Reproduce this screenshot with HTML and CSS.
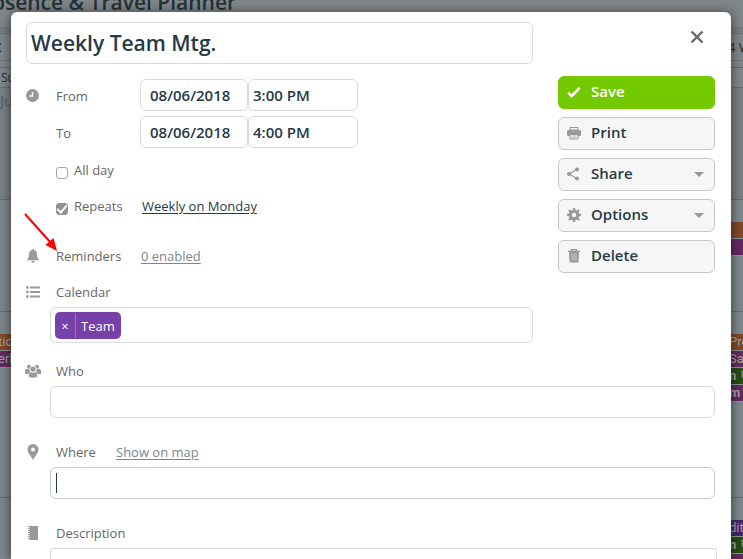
FILE: index.html
```html
<!DOCTYPE html>
<html lang="en">
<head>
<meta charset="utf-8">
<title>Absence &amp; Travel Planner</title>
<link rel="stylesheet" href="styles.css">
</head>
<body>
<div class="backdrop">
  <header class="page-title">Absence &amp; Travel Planner</header>
  <div class="toolbar"><span class="prev">‹</span><span class="weeks">4 Weeks</span></div>
  <div class="day-names"><span>Sun</span></div>
  <div class="week week-first"><div class="cell month">Jul</div></div>
  <div class="week">
    <div class="cell"></div>
    <div class="cell last"><p class="event orange"></p><p class="event magenta"></p></div>
  </div>
  <div class="week week-tall">
    <div class="cell"><p class="event orange">tion</p><p class="event magenta">erly</p></div>
    <div class="cell last"><p class="event orange">Pro</p><p class="event magenta">Sales</p><p class="event green"><b>n</b> ↻</p><p class="event magenta"><b>m</b></p></div>
  </div>
  <div class="week">
    <div class="cell"></div>
    <div class="cell last"><p class="event violet">dit</p><p class="event green"><b>n</b> ↻</p><p class="event magenta"></p></div>
  </div>
</div>

<form class="dialog" aria-label="Edit event">
  <button type="button" class="close" aria-label="Close"><svg width="14" height="14" viewBox="0 0 14 14"><path d="M1.5 1.5l11 11M12.5 1.5l-11 11" stroke="#666" stroke-width="2.4"/></svg></button>
  <div class="top">
    <div class="details">
      <input class="title" aria-label="Title" value="Weekly Team Mtg.">
      <div class="row time-row">
        <span class="icon"><svg width="14" height="14" viewBox="0 0 14 14"><circle cx="6.500" cy="7.500" r="6.500" fill="#999"/><path d="M6.500 4v4H3.500" fill="none" stroke="#fff" stroke-width="1.4"/></svg></span>
        <label class="label" for="from">From</label>
        <input class="date" id="from" value="08/06/2018"><input class="time" aria-label="From time" value="3:00 PM">
      </div>
      <div class="row time-row">
        <span class="icon"></span>
        <label class="label" for="to">To</label>
        <input class="date" id="to" value="08/06/2018"><input class="time" aria-label="To time" value="4:00 PM">
      </div>
      <div class="row check-row">
        <span class="icon"></span>
        <input type="checkbox" id="allday"><label for="allday">All day</label>
      </div>
      <div class="row check-row">
        <span class="icon"></span>
        <input type="checkbox" id="repeats" checked><label class="repeat-label" for="repeats">Repeats</label>
        <a class="dark" href="#">Weekly on Monday</a>
      </div>
      <div class="row reminder-row">
        <span class="icon"><svg width="12" height="14" viewBox="0 0 12 14"><path d="M6 0a1 1 0 0 1 1 1.1C9 1.600 10 3.200 10 5.200c0 2.800.6 4.200 1.800 5.300v.8H.2v-.8C1.400 9.400 2 8 2 5.200c0-2 1-3.600 3-4.100A1 1 0 0 1 6 0zM4.200 12h3.600a1.800 1.800 0 0 1-3.600 0z" fill="#999"/></svg></span>
        <span class="label">Reminders</span>
        <a href="#">0 enabled</a>
      </div>
      <div class="row head">
        <span class="icon"><svg width="14" height="12" viewBox="0 0 14 12"><g fill="#999"><circle cx="1.400" cy="1.500" r="1.400"/><circle cx="1.400" cy="6" r="1.400"/><circle cx="1.400" cy="10.500" r="1.400"/><path d="M4 .5h10v2H4zM4 5h10v2H4zM4 9.500h10v2H4z"/></g></svg></span>
        <span>Calendar</span>
      </div>
      <div class="field tags"><span class="tag"><button type="button" aria-label="Remove Team">×</button><span>Team</span></span></div>
    </div>
    <div class="actions">
      <button type="button" class="save"><svg width="16" height="14" viewBox="0 0 16 14"><path d="M2.200 7.600l3.500 3.600 7.800-8.400" fill="none" stroke="#fff" stroke-width="2.600"/></svg>Save</button>
      <button type="button"><svg width="16" height="14" viewBox="0 0 16 14"><g fill="#999"><path d="M4 1.500h8v2.500H4z" fill="#f6f6f6" stroke="#999"/><rect x="1" y="4" width="14" height="6" rx="1.500"/><path d="M4 8.500h8v4.500H4z" fill="#f6f6f6" stroke="#999"/><path d="M5.500 9.500h5v1h-5zM5.500 11.200h5v1h-5z" fill="#bbb"/></g></svg>Print</button>
      <button type="button"><svg width="16" height="14" viewBox="0 0 16 14"><g fill="#999"><path d="M11 2.500L3 7l8 4.500" fill="none" stroke="#999" stroke-width="1.300"/><circle cx="11" cy="2.500" r="2"/><circle cx="3" cy="7" r="2"/><circle cx="11" cy="11.500" r="2"/></g></svg>Share<i class="arrow"></i></button>
      <button type="button"><svg width="16" height="14" viewBox="0 0 16 14"><g fill="none" stroke="#999"><circle cx="8" cy="7" r="3.700" stroke-width="3"/><path d="M8 0v3M8 11v3M1 7h3M12 7h3M3 2l2 2M11 10l2 2M13 2l-2 2M5 10l-2 2" stroke-width="2.400"/></g></svg>Options<i class="arrow"></i></button>
      <button type="button"><svg width="16" height="14" viewBox="0 0 16 14"><g fill="none" stroke="#999"><path d="M5.500 2V.7h5V2M2 2.400h12" stroke-width="1.300"/><path d="M3.500 3.500h9l-.6 9.500H4.100z" fill="#999"/><path d="M6 4.500v7M8 4.500v7M10 4.500v7" stroke="#ccc"/></g></svg>Delete</button>
    </div>
  </div>
  <div class="row head">
    <span class="icon wide"><svg width="16" height="14" viewBox="0 0 16 14"><g fill="#999"><circle cx="4" cy="2.700" r="2"/><circle cx="12" cy="2.700" r="2"/><path d="M0 10V7C0 5.500 1 5 2.500 5h2L5 10zM16 10V7c0-1.500-1-2-2.500-2h-2L11 10z"/><circle cx="8" cy="5.200" r="3" stroke="#fff" stroke-width=".7"/><path d="M3.500 12.500V11c0-2 1-3 2.500-3 1.200.8 2.800.8 4 0 1.500 0 2.500 1 2.500 3v1.500c-2 2-7 2-9 0z" stroke="#fff" stroke-width=".5"/></g></svg></span>
    <label for="who">Who</label>
  </div>
  <input class="field" id="who">
  <div class="row head spaced">
    <span class="icon"><svg width="12" height="16" viewBox="0 0 12 16"><path fill-rule="evenodd" d="M6 0a5.500 5.500 0 0 1 5.500 5.500C11.500 9 8 12 6 16 4 12 .5 9 .5 5.500A5.500 5.500 0 0 1 6 0zm0 3.600a2 2 0 1 0 0 4 2 2 0 0 0 0-4z" fill="#999"/></svg></span>
    <label class="where" for="where">Where</label>
    <a href="#">Show on map</a>
  </div>
  <div class="where-box"><input class="field focus" id="where"><i class="caret"></i></div>
  <div class="row head spaced">
    <span class="icon"><svg width="10" height="14" viewBox="0 0 10 14"><path d="M1.500 0H10v14H1.500z" fill="#999"/><path d="M.7 0v14" stroke="#999" stroke-width="1.600" stroke-dasharray="1 1"/></svg></span>
    <label for="description">Description</label>
  </div>
  <textarea id="description"></textarea>
</form>

<svg class="pointer" width="36" height="40" viewBox="0 0 36 40" aria-hidden="true"><path d="M1 1l26 29" stroke="red" stroke-width="2"/><path d="M33 38l-11.500-6 8-7z" fill="red"/></svg>
</body>
</html>
```
FILE: styles.css
```css
* { box-sizing: border-box; }

html, body { height: 100%; }

body {
  margin: 0;
  overflow: hidden;
  font: 13px/20px "Open Sans", "Noto Sans", sans-serif;
  color: #666;
}

button, input, textarea { font: inherit; color: #263a47; margin: 0; }

/* Calendar behind the dialog */
.backdrop {
  height: 100%;
  overflow: hidden;
  background: #80878a;
  color: #263238;
}

.page-title {
  height: 27px;
  margin-left: -22px;
  font-size: 21px;
  line-height: 4px;
  font-weight: 600;
}

.toolbar {
  display: flex;
  justify-content: space-between;
  height: 40px;
  border-top: 6px solid #777c7e;
  line-height: 26px;
  overflow: hidden;
  white-space: nowrap;
}

.prev { width: 20px; height: 28px; margin-left: -6px; font-size: 24px; border: 1px solid #6c7274; line-height: 22px; }
.weeks { width: 15px; height: 28px; border: solid #6c7274; border-width: 1px 0; }

.day-names {
  height: 21px;
  border: solid #5d6c84;
  border-width: 1px 0;
  padding-left: 1px;
  font-size: 12px;
}

.week {
  display: flex;
  justify-content: space-between;
  height: 112px;
  padding-top: 22px;
  border-bottom: 1px solid #5f6f82;
  background: #7d878b;
}

.week-first { padding-top: 0; background: #7b8083; }
.week-tall { height: 186px; }
.cell { width: 14px; overflow: hidden; white-space: nowrap; }
.month { font-size: 15px; line-height: 24px; color: #555b5f; }
.event {
  height: 17px;
  margin: 0;
  border-bottom: 1px solid #8b9896;
  font: 13px/16px Roboto, sans-serif;
  color: #a5a5a5;
}
.cell:first-child .event { margin-left: -2px; }
.orange { background: #80492a; }
.magenta { background: #632a61; }
.green { background: #284d14; }
.violet { background: #44286b; }

/* Dialog */
.dialog {
  position: absolute;
  inset: 12px 12px 0 11px;
  padding: 10px 16px 0 15px;
  overflow: hidden;
  border-radius: 6px 6px 0 0;
  background: #fff;
  box-shadow: 0 1px 12px rgba(0, 0, 0, .6);
}

.close {
  position: absolute;
  top: 18px;
  right: 27px;
  display: flex;
  padding: 0;
  border: 0;
  background: none;
}

.top { display: grid; grid-template-columns: 1fr 157px; gap: 25px; margin-bottom: 18px; }

.row { display: flex; align-items: center; }
.icon { display: flex; justify-content: center; width: 14px; margin-right: 16px; flex: none; }
.icon svg { flex: none; }
.label { width: 85px; }

.title, .date, .time, .field, textarea {
  border: 1px solid #d9dadb;
  border-radius: 6px;
  background: #fff;
  outline: 0;
}

.title {
  display: block;
  width: 100%;
  height: 42px;
  margin-bottom: 15px;
  padding: 0 4px;
  font-size: 21px;
  font-weight: 600;
}

.time-row { margin-bottom: 5px; }
.time-row .label { width: 84px; padding-top: 2px; }
.date, .time { height: 32px; font-size: 15px; font-weight: 600; }
.date { width: 108px; padding: 0 9px; }
.time { width: 110px; padding: 0 4px; }

.check-row { height: 36px; padding-bottom: 2px; }
input[type="checkbox"] {
  appearance: none;
  width: 12px;
  height: 12px;
  margin: 6px 6px 0 0;
  border: 1px solid #a5a5a5;
  border-radius: 3px;
}
input[type="checkbox"]:checked {
  border-color: #929296;
  background: #929296;
  display: flex;
  align-items: center;
  justify-content: center;
}
input[type="checkbox"]:checked::before {
  content: "";
  width: 4px;
  height: 8px;
  margin-bottom: 2px;
  border: solid #fff;
  border-width: 0 2px 2px 0;
  transform: rotate(40deg);
}
.repeat-label { width: 68px; }

a { color: #808590; text-underline-offset: 2px; }
.dark { color: #263a47; }

.reminder-row { height: 36px; margin: 13px 0 8px; }
.head { height: 20px; margin-bottom: 5px; }
.spaced { margin-top: 24px; }

.field { display: block; width: calc(100% - 24px); height: 32px; margin-left: 24px; padding: 0 5px; }
.tags { height: 36px; padding: 4px; }
.focus { border-color: #c9cacb; }

.tag {
  display: flex;
  align-items: center;
  width: fit-content;
  height: 27px;
  padding-right: 6px;
  border-radius: 5px;
  background: #7741a9;
  color: #fff;
}
.tag button {
  width: 21px;
  height: 25px;
  margin-right: 5px;
  padding: 0;
  border: 0;
  border-right: 1px solid #9a72c0;
  background: none;
  color: #fff;
}

.actions { display: flex; flex-direction: column; gap: 8px; padding-top: 54px; }
.actions button {
  display: flex;
  align-items: center;
  height: 33px;
  padding: 0 10px 4px 7px;
  border: 1px solid #c5c7ca;
  border-radius: 6px;
  background: #f6f6f6;
  font-size: 15px;
  font-weight: 600;
}
.actions svg { margin: 3px 9px 0 0; }
.actions .save { border-color: #72c900; background: #72c900; color: #fff; }
.arrow { margin: 3px 0 0 auto; border: solid transparent; border-width: 5px 5px 0; border-top-color: #999; }

.where { width: 60px; }
.where-box { position: relative; }
.caret { position: absolute; left: 30px; top: 6px; width: 1px; height: 20px; background: #263a47; }

textarea {
  display: block;
  width: calc(100% - 22px);
  height: 80px;
  margin-left: 24px;
  border-radius: 3px;
  resize: none;
}

/* Callout arrow lying over the dialog */
.pointer { position: absolute; left: 24px; top: 213px; }
```
